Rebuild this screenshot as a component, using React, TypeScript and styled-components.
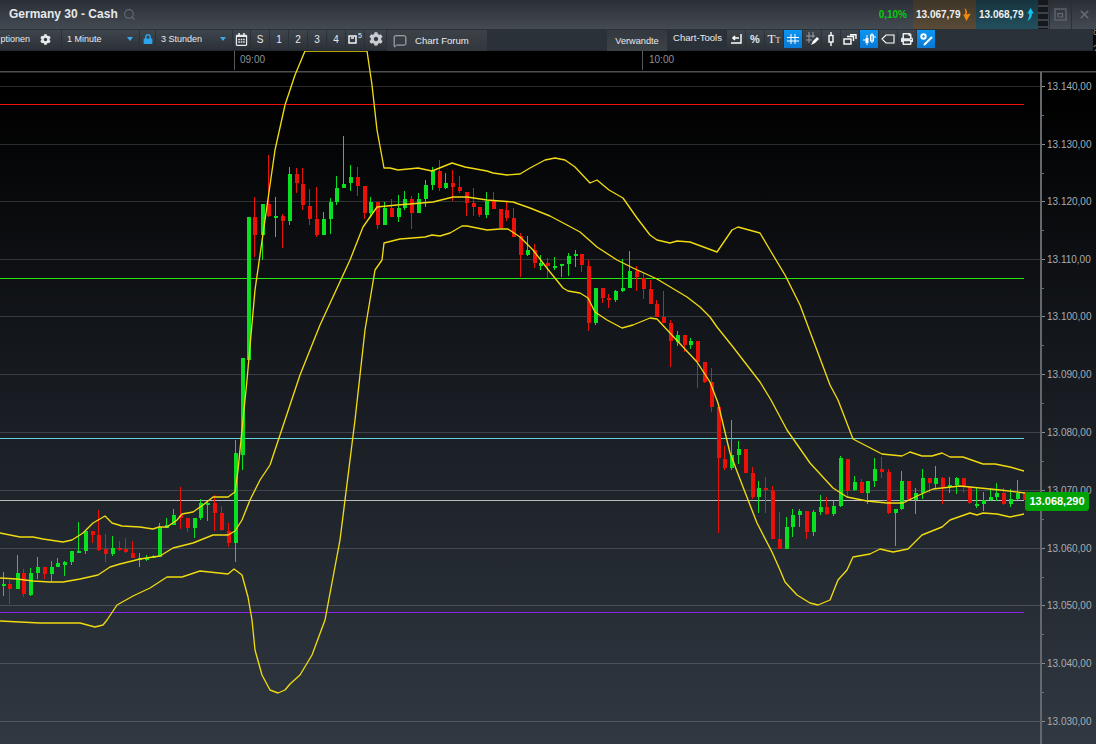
import React from "react";
import styled, { createGlobalStyle } from "styled-components";
import { FaCog, FaLock, FaRegCalendarAlt, FaPrint } from "react-icons/fa";
import { Search, MessageSquare, X } from "lucide-react";

const Global = createGlobalStyle`
  html, body { margin: 0; padding: 0; background: #000; }
  body { font-family: "Liberation Sans", Arial, sans-serif; overflow: hidden; }
`;

const Page = styled.div`
  width: 1096px; height: 744px; display: flex; flex-direction: column; overflow: hidden;
`;
const TitleBar = styled.header`
  height: 29px; flex: none; display: flex; align-items: stretch;
  background: linear-gradient(#2a2f36, #454b53);
`;
const Title = styled.h1`
  margin: 0 0 0 9px; font-size: 12px; font-weight: bold; color: #e6e8ea; line-height: 28px; white-space: nowrap;
`;
const SearchSlot = styled.span`
  margin-left: 5px; display: flex; align-items: center; color: #676c72;
`;
const Spacer = styled.div`flex: 1;`;
const Change = styled.span`
  font-size: 10px; font-weight: bold; color: #06c90f; line-height: 29px; margin-right: 6px;
`;
const Quote = styled.div<{ $tone: "sell" | "buy" }>`
  width: ${p => (p.$tone === "sell" ? 63 : 62)}px; display: flex; align-items: center; justify-content: flex-start;
  padding-left: 3px; box-sizing: border-box; gap: 2px;
  font-size: 10px; font-weight: bold; color: #f0f0f0;
  background: ${p => (p.$tone === "sell" ? "linear-gradient(#3e3528, #5a4b38)" : "linear-gradient(#16333d, #24505f)")};
`;
const Grille = styled.div`
  width: 10px; margin-right: 1px;
  background: repeating-linear-gradient(#15181c 0 5px, #3d4249 5px 7px);
`;
const WindowButton = styled.div<{ $w: number }>`
  width: ${p => p.$w}px; display: flex; align-items: center; justify-content: center;
  color: #676c72; border-left: 1px solid #2c3036; box-sizing: border-box;
`;
const Toolbar = styled.nav`
  height: 22px; flex: none; display: flex; align-items: stretch; position: relative;
  background: #2b3138; overflow: hidden;
`;
const ToolRow = styled.div`
  width: 1093px; flex: none; display: flex; align-items: flex-start; padding-top: 1px; box-sizing: border-box;
  background: #2b3138; box-shadow: inset 0 -1px 0 #23282e;
`;
const EdgeColumn = styled.div`
  flex: 1; background: #060708; color: #888; font-size: 10px; line-height: 18px; overflow: hidden; margin-top: -6px;
`;
const Tool = styled.button<{ $w: number; $active?: boolean; $gap?: number; $h?: number }>`
  width: ${p => p.$w}px; height: ${p => p.$h ?? 18}px; flex: none; margin: 0 ${p => p.$gap ?? 1}px 0 0; padding: 0;
  border: 0; display: flex; align-items: center; justify-content: center; gap: 6px;
  font: 10px "Liberation Sans", Arial, sans-serif; color: #e8eaec; white-space: nowrap;
  background: ${p => (p.$active ? "linear-gradient(#0b97f2, #0a78d4)" : "linear-gradient(#3f454c, #2e333a)")};
`;
const Select = styled(Tool)`
  justify-content: space-between; padding: 0 6px 0 5px; font-size: 9px;
`;
const Caret = styled.span`
  width: 0; height: 0; border: 3px solid transparent; border-top: 4px solid #3aa9ee; border-bottom: 0;
`;
const OptionsButton = styled(Tool)`
  justify-content: flex-end; padding-right: 10px; gap: 10px; overflow: hidden; font-size: 9px;
`;
const ForumButton = styled(Tool)`
  justify-content: flex-start; padding-left: 6px; gap: 8px; margin-right: 120px; height: 21px;
  font-size: 9.6px; background: linear-gradient(#3d4248, #32373d);
`;
const RelatedButton = styled(Tool)`
  height: 21px; margin-right: 6px; font-size: 9.2px; background: linear-gradient(#33383f, #3d4249);
`;
const ToolsLabel = styled.span`
  width: 54px; flex: none; font-size: 9.6px; color: #e8eaec; line-height: 15px;
`;
const ToolPercent = styled(Tool)`font-weight: bold; font-size: 11px;`;
const ToolType = styled(Tool)`font-family: "Liberation Serif", serif; font-size: 13px; gap: 0;`;
const SmallType = styled.small`font-size: 8px; align-self: flex-end; margin-bottom: 3px;`;
const Sup = styled.sup`font-size: 7px; line-height: 0; margin-left: -5px; margin-top: -7px;`;
const ChartArea = styled.main`
  flex: 1; position: relative;
  background: linear-gradient(#000 0, #000 6%, #181c22 50%, #303841 100%);
`;
const PriceBadge = styled.div`
  position: absolute; left: 1025px; top: 441px; width: 64px; height: 19px; border-radius: 3px;
  background: #00a407; color: #fff; font-size: 11px; font-weight: bold; line-height: 19px; text-align: center;
`;
const ChartSvg = styled.svg`display: block; position: absolute; inset: 0;`;
const AxisLabel = styled.text`font: 10px "Liberation Sans", Arial, sans-serif; fill: #a7adb3;`;
const TimeLabel = styled.text`font: 10px "Liberation Sans", Arial, sans-serif; fill: #8d9298;`;

type C = [number, number, number, number, number, 0 | 1];
const candles: C[] = [
[3,572,596,584,586,1],[9,580,604,584,589,0],[17,555,589,573,589,1],[23,569,597,573,594,0],[30,568,596,573,595,1],[37,557,579,567,573,1],[44,567,579,567,574,0],[51,561,582,567,574,1],[57,558,567,563,567,1],[64,561,576,562,565,1],[71,551,565,551,562,1],[78,522,553,551,553,1],[85,531,554,531,551,1],[92,531,543,531,535,0],[98,510,551,535,550,0],[105,534,562,549,554,0],[112,536,556,548,554,1],[119,541,551,548,550,0],[125,538,553,549,552,0],[132,541,558,553,558,0],[139,553,567,558,559,1],[146,555,561,558,559,1],[153,555,558,556,558,1],[159,523,557,527,557,1],[166,518,528,525,528,1],[173,509,525,515,525,1],[180,487,529,515,518,0],[187,518,532,518,528,0],[194,518,538,518,528,1],[200,499,520,503,518,1],[207,502,521,503,505,1],[214,495,531,503,513,0],[221,506,531,513,530,0],[228,523,547,531,543,0],[235,440,562,453,543,1],[242,358,470,358,455,1],[248,217,360,217,360,1],
[254,197,257,217,235,0],[262,204,260,204,235,1],[268,155,217,204,216,0],[275,197,237,216,217,1],[282,214,248,216,221,0],[289,167,225,174,221,1],[296,168,193,174,183,0],[302,168,210,184,205,0],[309,189,225,206,219,0],[316,187,237,219,235,0],[323,212,235,219,235,1],[330,198,234,202,219,1],[336,176,205,188,202,1],[343,136,188,184,188,1],[350,165,191,177,183,1],[357,167,196,177,186,0],[364,186,219,186,213,0],[370,197,218,202,213,1],[377,202,229,202,225,0],[384,202,225,208,225,1],[391,199,217,208,217,0],[398,195,222,208,217,1],[404,191,210,199,208,1],[411,196,229,199,213,0],[418,193,213,199,213,1],[425,180,207,185,199,1],[432,167,190,171,185,1],[439,160,191,171,188,0],[445,173,189,183,188,1],[452,170,201,183,187,0],[459,176,193,187,191,0],[466,192,216,192,203,0],[473,188,216,203,207,0],[479,207,217,207,215,0],[486,192,218,201,215,1],[493,192,209,201,209,0],
[500,209,228,209,228,0],[506,202,221,210,218,0],[513,208,237,218,237,0],[520,233,277,236,255,0],[527,236,256,250,255,1],[534,244,268,250,263,0],[540,255,270,263,266,1],[547,258,278,263,266,0],[554,257,270,266,268,1],[561,264,277,264,266,1],[568,253,276,256,264,1],[575,250,267,254,256,1],[581,254,272,254,265,0],[588,260,331,266,323,0],[595,288,325,288,323,1],[602,288,303,288,298,0],[608,294,308,298,300,0],[615,290,302,291,300,1],[622,259,292,288,291,1],[629,251,288,271,288,1],[636,266,291,271,277,0],[643,273,299,278,289,0],[650,280,304,289,304,0],[656,300,317,304,317,0],[663,291,323,317,323,0],[670,320,367,323,341,0],[677,331,346,335,342,1],[684,335,352,335,345,0],[690,338,349,341,345,1],[697,341,388,341,362,0],[704,362,383,362,382,0],[711,368,412,382,407,0],
[718,407,533,407,458,0],[724,446,470,459,468,0],[731,420,470,455,468,1],[738,441,464,449,455,1],[745,449,473,449,473,0],[752,467,499,473,497,0],[758,481,513,488,497,1],[765,477,513,488,490,0],[772,486,539,491,539,0],[779,512,549,539,549,0],[786,517,549,527,549,1],[792,509,537,515,527,1],[799,509,527,511,515,1],[806,511,539,511,532,0],[813,510,536,512,532,1],[820,495,515,507,512,1],[826,497,515,507,514,0],[833,501,516,506,514,1],[840,456,507,458,506,1],[847,459,497,459,491,0],[854,476,491,482,490,1],[861,479,493,482,493,0],[867,481,504,481,493,1],[874,458,487,469,481,1],[881,457,478,469,472,0],[888,469,514,472,513,0],[895,509,546,509,513,1],[901,471,510,481,509,1],[908,481,500,481,500,0],[915,488,514,493,500,1],[922,469,499,478,493,1],[929,478,493,478,483,0],[935,466,488,478,484,1],[942,477,504,478,487,0],[949,477,493,485,487,1],[956,477,494,478,485,1],[963,478,493,478,487,0],[969,487,504,487,503,0],[976,488,508,504,506,1],[983,492,511,500,504,1],[990,488,501,497,500,1],[996,483,501,493,497,1],[1003,488,505,493,504,0],[1010,489,507,499,504,1],[1017,480,500,493,499,1],[1024,492,500,492,500,0],
];

const upper = "0,533 10,535 20,537 33,537 43,539 63,542 72,540 83,533 93,523 105,516 112,523 122,526 140,527 153,529 159,527 167,527 177,520 182,514 193,512 203,505 213,497 228,497 235,492 238,470 241,440 247,380 255,290 265,220 275,150 285,105 295,75 305,51 367,51 372,85 377,130 384,168 390,168 398,170 418,168 432,171 452,163 465,167 487,171 493,173 507,175 520,174 530,168 545,160 555,158 565,160 575,167 590,183 597,180 609,190 623,198 637,218 650,235 657,240 670,243 677,241 690,242 717,252 732,230 738,227 760,233 770,250 785,275 800,305 815,345 830,385 838,400 853,439 882,454 902,456 910,452 922,456 932,456 942,453 950,457 963,457 983,464 995,464 1010,467 1024,471";
const middle = "0,578 17,579 33,581 50,582 63,582 80,579 98,575 110,567 120,564 140,559 153,557 160,556 173,548 193,543 213,535 228,535 235,531 242,520 250,500 260,480 270,465 280,435 300,375 320,325 350,260 363,227 377,207 397,205 410,204 433,202 453,197 467,197 487,200 500,201 513,202 530,208 550,216 567,225 580,232 597,247 617,260 633,268 657,279 687,297 700,307 710,317 717,327 733,347 760,382 771,400 787,430 810,463 833,488 847,497 867,501 887,503 903,503 917,496 933,489 960,486 970,487 1000,490 1025,493";
const lower = "0,621 40,623 80,623 95,627 103,625 107,620 117,605 133,596 150,588 167,577 182,577 200,571 228,574 234,569 242,575 248,597 252,620 255,650 262,675 270,690 278,693 285,690 290,684 300,675 312,655 325,620 340,540 355,420 365,330 375,270 382,260 384,243 400,239 425,237 432,235 440,236 450,233 462,226 467,226 487,230 500,229 508,229 520,237 533,250 550,272 563,288 568,291 580,293 588,298 595,312 607,320 622,328 633,325 650,318 657,319 670,333 697,362 710,382 718,403 730,453 743,487 757,523 772,552 780,570 785,582 797,595 810,603 818,605 830,600 838,580 847,570 853,557 870,554 880,549 893,552 908,549 922,535 942,527 950,520 970,513 977,515 983,513 997,514 1010,517 1024,514";

const levels: [number, string][] = [[86,"13.140,00"],[144,"13.130,00"],[201,"13.120,00"],[259,"13.110,00"],[316,"13.100,00"],[374,"13.090,00"],[432,"13.080,00"],[490,"13.070,00"],[548,"13.060,00"],[605,"13.050,00"],[663,"13.040,00"],[721,"13.030,00"]];

const Levels: [number, string][] = [[104.5,"#f2100c"],[278.5,"#22e80e"],[438.5,"#63d3dc"],[500.5,"#b9bcbf"],[612.5,"#8a22e8"]];

const Glyph: React.FC<{ children: React.ReactNode; w?: number; h?: number }> = ({ children, w = 16, h = 14 }) => (
  <svg width={w} height={h} viewBox={`0 0 ${w} ${h}`} fill="none" stroke="#fff" strokeWidth="1.4">{children}</svg>
);

export default function App() {
  return (
    <Page>
      <Global />
      <TitleBar>
        <Title>Germany 30 - Cash</Title>
        <SearchSlot><Search size={13} strokeWidth={2} /></SearchSlot>
        <Spacer />
        <Change>0,10%</Change>
        <Quote $tone="sell">13.067,79
          <svg width="8" height="13" viewBox="0 0 7 12"><path d="M1 0C4 2 4 4 3 6L7 5 3 12 0 6 1.5 6C2.5 4 2 2 1 0Z" fill="#f28a0c" /></svg>
        </Quote>
        <Quote $tone="buy">13.068,79
          <svg width="8" height="13" viewBox="0 0 7 12"><path d="M4 0 7 5H5.2C5.5 8 4 10 1 12 2.5 9 3 7 2.8 5H1Z" fill="#12c4ee" /></svg>
        </Quote>
        <Grille />
        <WindowButton $w={22}>
          <svg width="13" height="13" viewBox="0 0 13 13" fill="none" stroke="#676c72" strokeWidth="1.2"><rect x="1" y="1" width="11" height="11" /><path d="M4 9V5.5H8.5V9H5" /></svg>
        </WindowButton>
        <WindowButton $w={25}><X size={13} strokeWidth={3} /></WindowButton>
      </TitleBar>
      <Toolbar>
        <ToolRow>
          <OptionsButton $w={61}>ptionen<FaCog size={11} /></OptionsButton>
          <Select $w={77}>1 Minute<Caret /></Select>
          <Tool $w={15}><FaLock size={10} color="#2ba6ee" /></Tool>
          <Select $w={76}>3 Stunden<Caret /></Select>
          <Tool $w={17}><FaRegCalendarAlt size={13} /></Tool>
          <Tool $w={18}>S</Tool>
          <Tool $w={18}>1</Tool>
          <Tool $w={18}>2</Tool>
          <Tool $w={18}>3</Tool>
          <Tool $w={18}>4</Tool>
          <Tool $w={18}>
            <Glyph w={9} h={9}><rect x="1" y="1" width="7" height="7" /><path d="M3 3H6" /></Glyph>
            <Sup>5</Sup>
          </Tool>
          <Tool $w={21}><FaCog size={14} color="#c9cdd1" /></Tool>
          <ForumButton $w={100}>
            <MessageSquare size={14} strokeWidth={1.5} color="#c9cdd1" />Chart Forum
          </ForumButton>
          <RelatedButton $w={60}>Verwandte</RelatedButton>
          <ToolsLabel>Chart-Tools</ToolsLabel>
          <Tool $w={18}><Glyph w={12} h={12}><path d="M11 1V10H1" /><path d="M9 5H3M5 3 3 5 5 7" strokeWidth="1.6" /></Glyph></Tool>
          <ToolPercent $w={18}>%</ToolPercent>
          <ToolType $w={18}>T<SmallType>T</SmallType></ToolType>
          <Tool $w={18} $active><Glyph w={12} h={12}><path d="M0 4.5H12M0 8H12M4 1V11M8 1V11" strokeWidth="1" /></Glyph></Tool>
          <Tool $w={18}><Glyph w={15} h={14}><path d="M1 4H10M1 8H7M4 0V11M8 0V6" stroke="#9aa0a6" strokeWidth="1" /><path d="M6 13 8 9 12 5 14 7 10 11Z" fill="#fff" stroke="none" /></Glyph></Tool>
          <Tool $w={18}><Glyph w={8} h={14}><path d="M4 0V3M4 10V14" /><rect x="2" y="3.5" width="4" height="6.5" /></Glyph></Tool>
          <Tool $w={18}><Glyph w={14} h={11}><rect x="1" y="5" width="7" height="5" /><path d="M4 2.5H10.5V7M7 0.8H13V5" /></Glyph></Tool>
          <Tool $w={18} $active><Glyph w={15} h={15}><path d="M1 8H4M5 3V13M10 1V11M11 5H14" strokeWidth="1" /><rect x="3.5" y="6" width="3" height="5" fill="#fff" stroke="none" /><rect x="8.5" y="3" width="3" height="6" fill="none" strokeWidth="1" /></Glyph></Tool>
          <Tool $w={18}><Glyph w={14} h={10}><path d="M1 5 5 1H13V9H5Z" strokeWidth="1.1" /></Glyph></Tool>
          <Tool $w={18}><FaPrint size={12} /></Tool>
          <Tool $w={18} $active>
            <Glyph w={15} h={14}><circle cx="4.5" cy="4.5" r="2.2" strokeWidth="2" /><path d="M5 13 13 5" strokeWidth="2" /></Glyph>
          </Tool>
        </ToolRow>
        <EdgeColumn>8<br />2</EdgeColumn>
      </Toolbar>
      <ChartArea>
        <ChartSvg width="1096" height="693" viewBox="0 51 1096 693">
          <path d="M234.5 51V70M642.5 51V70" stroke="#55595e" />
          <TimeLabel x="240" y="63">09:00</TimeLabel>
          <TimeLabel x="649" y="63">10:00</TimeLabel>
          <rect x="0" y="71" width="1096" height="1.5" fill="#4b4e52" />
          {levels.map(([y, t]) => (
            <g key={t}>
              <line x1="0" x2="1040" y1={y + 0.5} y2={y + 0.5} stroke="#fff" strokeOpacity="0.16" />
              <line x1="1041" x2="1045" y1={y + 0.5} y2={y + 0.5} stroke="#8b9096" />
              <line x1="1041" x2="1044" y1={y + 29.5} y2={y + 29.5} stroke="#6b7076" />
              <AxisLabel x="1047" y={y + 3.5}>{t}</AxisLabel>
            </g>
          ))}
          <rect x="1040" y="72" width="2" height="672" fill="#64686d" />
          <g shapeRendering="crispEdges">
            {Levels.map(([y, c]) => <line key={c} x1="0" x2="1024" y1={y} y2={y} stroke={c} />)}
            {candles.map(([x, a, b, t, bt, g], i) => (
              <g key={i} fill={g ? "#08e020" : "#ea1208"}>
                <rect x={x} y={a} width="1" height={b - a} />
                <rect x={x - 1} y={t} width="3.5" height={Math.max(bt - t, 2)} />
              </g>
            ))}
          </g>
          {[upper, middle, lower].map((p, i) => (
            <polyline key={i} points={p} fill="none" stroke="#f0da10" strokeWidth="1.35" strokeLinejoin="round" />
          ))}
        </ChartSvg>
        <PriceBadge>13.068,290</PriceBadge>
      </ChartArea>
    </Page>
  );
}
